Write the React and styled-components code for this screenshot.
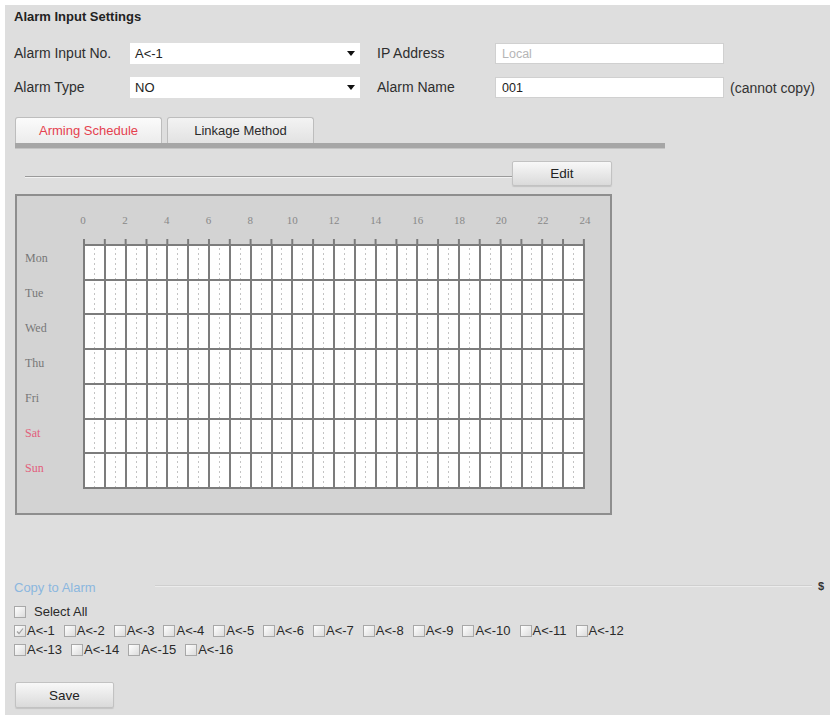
import React from "react";
import styled, { createGlobalStyle } from "styled-components";

const Global = createGlobalStyle`
  html, body { margin: 0; padding: 0; background: #ffffff; }
  body { font-family: "Liberation Sans", Arial, sans-serif; }
`;

const Panel = styled.div`
  margin: 5px 0 0 5px;
  width: 825px;
  height: 710px;
  box-sizing: border-box;
  background: #dedede;
  padding: 3px 0 0 9px;
  display: flex;
  flex-direction: column;
  color: #2a2a2a;
`;

const Title = styled.div`
  font-size: 13px;
  font-weight: bold;
  line-height: 18px;
  color: #222;
`;

const FormGrid = styled.div`
  margin-top: 17px;
  display: grid;
  grid-template-columns: 116px 230px 17px 118px 229px auto;
  grid-auto-rows: 21px;
  row-gap: 13px;
  align-items: center;
`;

const Label = styled.div`
  font-size: 14px;
  color: #2e2e2e;
  line-height: 21px;
  white-space: nowrap;
`;

const SelectBox = styled.div`
  height: 21px;
  background: #fff;
  display: flex;
  align-items: center;
  justify-content: space-between;
  padding: 0 5px 0 5px;
  box-sizing: border-box;
  font-size: 13px;
  color: #222;
`;

const Arrow = styled.span`
  width: 0;
  height: 0;
  border-left: 4px solid transparent;
  border-right: 4px solid transparent;
  border-top: 5px solid #111;
`;

const TextInput = styled.div`
  height: 21px;
  background: #fff;
  border: 1px solid #d0d0d0;
  box-sizing: border-box;
  padding: 0 6px;
  display: flex;
  align-items: center;
  font-size: 12.5px;
  color: ${(p) => (p.$placeholder ? "#b5b5b5" : "#222")};
`;

const Note = styled.div`
  font-size: 14px;
  color: #333;
  padding-left: 6px;
  white-space: nowrap;
`;

const TabBar = styled.div`
  margin-top: 19px;
  margin-left: 1px;
  width: 650px;
  display: flex;
  gap: 5px;
  border-bottom: 5px solid #a6a6a6;
  box-shadow: 0 1px 0 #c4c4c4;
`;

const Tab = styled.div`
  width: 147px;
  height: 26px;
  box-sizing: border-box;
  border: 1px solid #bdbdbd;
  border-bottom: none;
  border-radius: 3px 3px 0 0;
  background: ${(p) =>
    p.$active
      ? "linear-gradient(#fbfbfb, #ececec)"
      : "linear-gradient(#f3f3f3, #e2e2e2)"};
  display: flex;
  align-items: center;
  justify-content: center;
  font-size: 13px;
  color: ${(p) => (p.$active ? "#e5414f" : "#2a2a2a")};
`;

const EditRow = styled.div`
  margin-top: 13px;
  margin-left: 11px;
  width: 587px;
  display: flex;
  align-items: center;
`;

const Rule = styled.div`
  flex: 1;
  height: 1px;
  background: #9a9a9a;
  box-shadow: 0 1px 0 #f2f2f2;
  margin-top: 6px;
`;

const Button = styled.div`
  width: ${(p) => p.$w}px;
  height: ${(p) => p.$h}px;
  box-sizing: border-box;
  border: 1px solid #c2c2c2;
  border-radius: 2px;
  background: linear-gradient(#f8f8f8, #dadada);
  box-shadow: 0 1px 1px rgba(0, 0, 0, 0.12);
  display: flex;
  align-items: center;
  justify-content: center;
  font-size: 13.5px;
  color: #222;
`;

const ScheduleBox = styled.div`
  margin-top: 8px;
  margin-left: 1px;
  width: 597px;
  height: 321px;
  box-sizing: border-box;
  border: 2px solid #8e8e8e;
  background: #d3d3d3;
  display: grid;
  grid-template-columns: 66px 502px;
  grid-template-rows: 48px 245px;
`;

const HourScale = styled.div`
  grid-column: 2;
  display: flex;
  flex-direction: column;
  justify-content: flex-end;
  margin-left: -20.83px;
  width: 543.67px;
`;

const HourLabels = styled.div`
  display: grid;
  grid-template-columns: repeat(13, 1fr);
  margin-bottom: 13px;
`;

const HourLabel = styled.div`
  text-align: center;
  font-family: "Liberation Serif", "Times New Roman", serif;
  font-size: 11px;
  color: #888;
  line-height: 12px;
`;

const Ticks = styled.div`
  height: 5px;
  margin-left: 20.83px;
  width: 502px;
  background-image: linear-gradient(to right, #7a7a7a 2px, transparent 2px);
  background-size: 20.833px 100%;
  background-repeat: repeat-x;
`;

const DayCol = styled.div`
  grid-column: 1;
  grid-row: 2;
  display: grid;
  grid-template-rows: repeat(7, 1fr);
  padding-left: 8px;
`;

const DayLabel = styled.div`
  display: flex;
  align-items: center;
  padding-bottom: 6px;
  font-family: "Liberation Serif", "Times New Roman", serif;
  font-size: 12px;
  color: ${(p) => (p.$weekend ? "#e2607c" : "#777")};
`;

const Grid = styled.div`
  grid-column: 2;
  grid-row: 2;
  background: #7c7c7c;
  padding: 2px;
  display: grid;
  grid-template-columns: repeat(24, 1fr);
  grid-template-rows: repeat(7, 1fr);
  gap: 2px;
`;

const Cell = styled.div`
  background-color: #fff;
  background-image: linear-gradient(to bottom, #c4c4c4 40%, transparent 40%);
  background-size: 1px 5px;
  background-repeat: repeat-y;
  background-position: 50% 2px;
`;

const CopyRow = styled.div`
  margin-top: 64px;
  display: flex;
  align-items: center;
  height: 16px;
`;

const CopyLabel = styled.div`
  font-size: 13px;
  color: #8bb7df;
  width: 141px;
`;

const CopyRule = styled.div`
  flex: 1;
  height: 1px;
  background: #cfcfcf;
  box-shadow: 0 1px 0 #ececec;
  margin-top: -4px;
`;

const Glyph = styled.div`
  width: 18px;
  text-align: center;
  font-size: 11px;
  font-weight: bold;
  color: #333;
  margin-top: -3px;
`;

const CheckList = styled.div`
  margin-top: 10px;
  display: flex;
  flex-direction: column;
  gap: 6px;
`;

const CheckLine = styled.div`
  display: flex;
  align-items: center;
  column-gap: 9px;
`;

const CheckItem = styled.label`
  display: flex;
  align-items: center;
  gap: ${(p) => (p.$wide ? 8 : 1)}px;
  font-size: 13px;
  color: #2a2a2a;
  line-height: 13px;
`;

const Box = styled.span`
  width: 12px;
  height: 12px;
  box-sizing: border-box;
  border: 1px solid #a8a8a8;
  background: linear-gradient(135deg, #ffffff, #dcdcdc);
  display: inline-flex;
  align-items: center;
  justify-content: center;
`;

const SaveWrap = styled.div`
  margin-top: 26px;
  margin-left: 1px;
`;

const days = [
  { name: "Mon" },
  { name: "Tue" },
  { name: "Wed" },
  { name: "Thu" },
  { name: "Fri" },
  { name: "Sat", weekend: true },
  { name: "Sun", weekend: true },
];

const hours = Array.from({ length: 13 }, (_, i) => i * 2);
const cells = Array.from({ length: 7 * 24 }, (_, i) => i);

const Check = ({ checked }) => (
  <Box>
    {checked && (
      <svg width="8" height="8" viewBox="0 0 8 8">
        <path d="M1 4.5 L3 6.5 L7 1.5" fill="none" stroke="#a0a0a0" strokeWidth="1.2" />
      </svg>
    )}
  </Box>
);

const row1 = Array.from({ length: 12 }, (_, i) => i + 1);
const row2 = [13, 14, 15, 16];

export default function App() {
  return (
    <>
      <Global />
      <Panel>
        <Title>Alarm Input Settings</Title>
        <FormGrid>
          <Label>Alarm Input No.</Label>
          <SelectBox>
            A&lt;-1
            <Arrow />
          </SelectBox>
          <span />
          <Label>IP Address</Label>
          <TextInput $placeholder>Local</TextInput>
          <span />
          <Label>Alarm Type</Label>
          <SelectBox>
            NO
            <Arrow />
          </SelectBox>
          <span />
          <Label>Alarm Name</Label>
          <TextInput>001</TextInput>
          <Note>(cannot copy)</Note>
        </FormGrid>

        <TabBar>
          <Tab $active>Arming Schedule</Tab>
          <Tab>Linkage Method</Tab>
        </TabBar>

        <EditRow>
          <Rule />
          <Button $w={100} $h={25}>Edit</Button>
        </EditRow>

        <ScheduleBox>
          <HourScale>
            <HourLabels>
              {hours.map((h) => (
                <HourLabel key={h}>{h}</HourLabel>
              ))}
            </HourLabels>
            <Ticks />
          </HourScale>
          <DayCol>
            {days.map((d) => (
              <DayLabel key={d.name} $weekend={d.weekend}>
                {d.name}
              </DayLabel>
            ))}
          </DayCol>
          <Grid>
            {cells.map((c) => (
              <Cell key={c} />
            ))}
          </Grid>
        </ScheduleBox>

        <CopyRow>
          <CopyLabel>Copy to Alarm</CopyLabel>
          <CopyRule />
          <Glyph>$</Glyph>
        </CopyRow>

        <CheckList>
          <CheckLine>
            <CheckItem $wide>
              <Check />
              Select All
            </CheckItem>
          </CheckLine>
          <CheckLine>
            {row1.map((n) => (
              <CheckItem key={n}>
                <Check checked={n === 1} />
                A&lt;-{n}
              </CheckItem>
            ))}
          </CheckLine>
          <CheckLine>
            {row2.map((n) => (
              <CheckItem key={n}>
                <Check />
                A&lt;-{n}
              </CheckItem>
            ))}
          </CheckLine>
        </CheckList>

        <SaveWrap>
          <Button $w={99} $h={26}>Save</Button>
        </SaveWrap>
      </Panel>
    </>
  );
}
